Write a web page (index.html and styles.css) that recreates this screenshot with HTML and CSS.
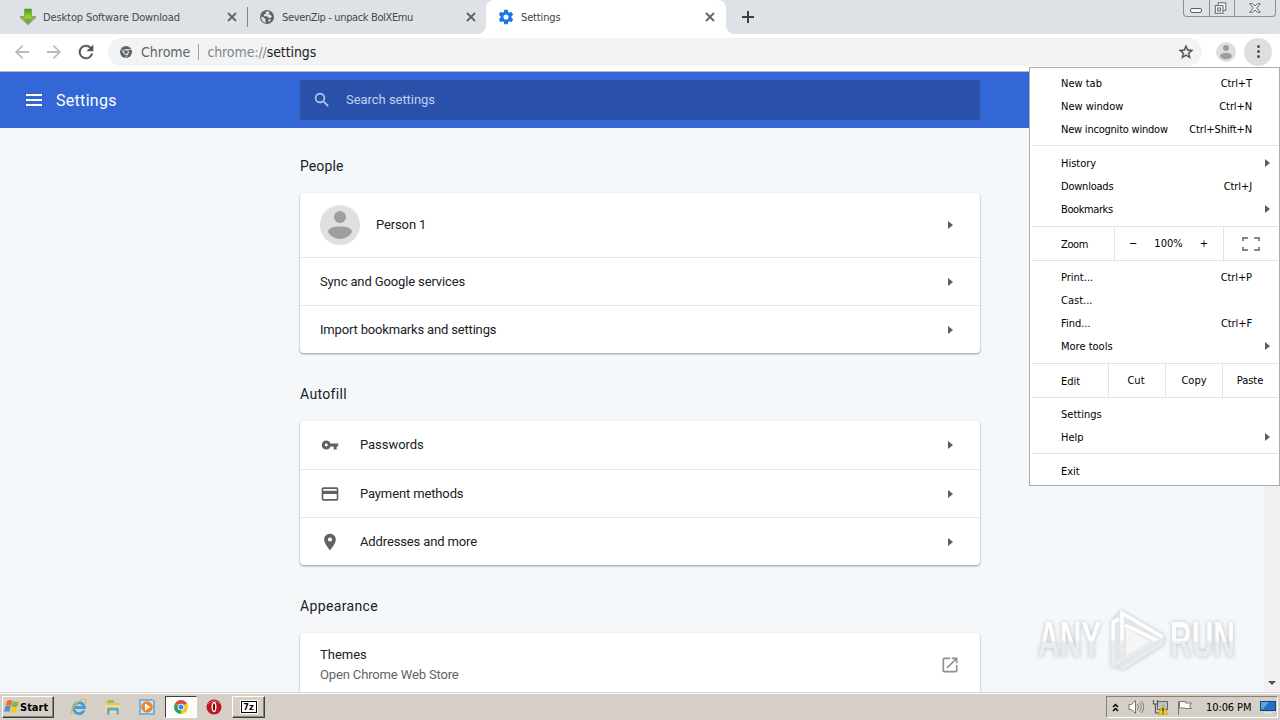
FILE: index.html
```
<!DOCTYPE html>
<html lang="en">

<head>
  <meta charset="utf-8">
  <title>Settings</title>
  <link rel="stylesheet" href="styles.css">
</head>

<body>
  <div class="tabstrip">
    <div class="tab tab-first">
      <svg class="favicon" width="18" height="18" viewBox="0 0 18 18">
        <defs><linearGradient id="green" x1="0" y1="0" x2="0" y2="1"><stop offset="0" stop-color="#3f9a12"/><stop offset=".55" stop-color="#9bd044"/><stop offset="1" stop-color="#47941e"/></linearGradient></defs>
        <path d="M1 10l8 7.500 8-7.500v-2H1z" fill="#aaa4a4"/>
        <path d="M5.500 1h7v7.500H16L9 15.500 2 8.500h3.500z" fill="url(#green)" stroke="#6ba33b" stroke-width=".7"/>
      </svg>
      <span class="tab-title t1">Desktop Software Download</span>
      <svg class="close" width="10" height="10" viewBox="0 0 10 10"><path d="M1 1l8 8M9 1L1 9"/></svg>
    </div>
    <div class="tab tab-second">
      <svg class="favicon" width="16" height="16" viewBox="0 0 16 16">
        <circle cx="8" cy="8" r="7" fill="#5f6368"/>
        <path d="M8.6 2.2l-2 1.1.3 1.6-2.2.6.4 1.7H8l1.2 1.5 2.4.3 1.3-1.4-1.2-1.6L9.3 5l1.2-1.2-.6-1.4zM2.3 7.5l2.6 1.1 1.9 2-.6 1.4.9 2-1.6-.5C3.300 12.500 2.200 10.200 2.300 7.500zM9.700 10.300l2.500.2-1.700 2.200-1.400-.6z" fill="#dee1e6"/>
      </svg>
      <span class="tab-title t2">SevenZip - unpack BolXEmu</span>
      <svg class="close" width="10" height="10" viewBox="0 0 10 10"><path d="M1 1l8 8M9 1L1 9"/></svg>
    </div>
    <div class="tab tab-active">
      <svg class="favicon" width="16" height="16" viewBox="1 1 22 22"><path fill="#1a73e8" d="M19.430 12.980c.040-.320.070-.640.070-.980s-.030-.660-.070-.980l2.110-1.650c.190-.150.240-.420.120-.640l-2-3.460c-.120-.220-.390-.300-.610-.220l-2.490 1c-.520-.400-1.080-.730-1.690-.980l-.380-2.650C14.460 2.180 14.250 2 14 2h-4c-.250 0-.460.180-.490.420l-.380 2.650c-.610.250-1.170.590-1.690.980l-2.490-1c-.230-.090-.490 0-.610.220l-2 3.460c-.130.220-.070.490.120.640l2.110 1.650c-.040.320-.070.650-.070.980s.030.660.070.980l-2.110 1.650c-.190.150-.240.420-.120.640l2 3.460c.120.220.390.300.610.220l2.490-1c.520.400 1.080.730 1.690.980l.380 2.650c.030.240.240.420.490.420h4c.250 0 .460-.180.490-.420l.380-2.650c.610-.250 1.170-.590 1.690-.980l2.490 1c.230.090.490 0 .610-.220l2-3.460c.120-.220.070-.490-.120-.640zM12 15.500a3.500 3.500 0 1 1 0-7 3.500 3.500 0 0 1 0 7z"/></svg>
      <span class="tab-title t3">Settings</span>
      <svg class="close" width="10" height="10" viewBox="0 0 10 10"><path d="M1 1l8 8M9 1L1 9"/></svg>
    </div>
    <svg class="newtab" width="12" height="12" viewBox="0 0 12 12"><path d="M6 0v12M0 6h12" stroke="#3c4043" stroke-width="2"/></svg>
    <div class="winbtns">
      <svg width="25" height="16" viewBox="0 0 25 16"><rect x="6.500" y="8.500" width="11" height="4" rx="1.500"/></svg>
      <svg width="25" height="16" viewBox="0 0 25 16"><path d="M8.500 5V2.500h8v8H13"/><rect x="5.500" y="5.500" width="8" height="8"/><rect x="8" y="8" width="3" height="3"/></svg>
      <svg width="41" height="16" viewBox="0 0 42 16"><path d="M15.500 3.500h3l2.500 2.500 2.500-2.500h3l-3.800 4.500 3.800 4.500h-3L21 10l-2.500 2.500h-3L19.300 8z"/></svg>
    </div>
  </div>

  <div class="toolbar">
    <svg class="nav" width="16" height="16" viewBox="3 3 18 18"><path fill="#b9bcbf" d="M20 11H7.830l5.590-5.590L12 4l-8 8 8 8 1.410-1.410L7.830 13H20v-2z"/></svg>
    <svg class="nav" width="16" height="16" viewBox="3 3 18 18"><path fill="#b9bcbf" d="M12 4l-1.410 1.410L16.170 11H4v2h12.170l-5.580 5.590L12 20l8-8z"/></svg>
    <svg class="nav" width="16" height="16" viewBox="3 3 18 18"><path fill="#505357" stroke="#505357" stroke-width=".4" d="M17.650 6.350A7.958 7.958 0 0 0 12 4a8 8 0 1 0 7.730 10h-2.080A6 6 0 1 1 12 6c1.660 0 3.140.690 4.220 1.780L13 11h7V4l-2.350 2.350z"/></svg>
    <div class="omnibox">
      <svg width="12" height="12" viewBox="0 0 12 12"><circle cx="6" cy="6" r="6" fill="#5f6368"/><circle cx="6" cy="6" r="2.400" fill="#5f6368" stroke="#f1f3f4"/><path d="M6 3.500h5M3.800 7.200L1.500 3.200M8.200 7.300L5.700 11.700" stroke="#f1f3f4" stroke-width=".7"/></svg>
      <span class="origin">Chrome</span>
      <span class="divider"></span>
      <span class="url">chrome://<b>settings</b></span>
      <svg class="star" width="16" height="16" viewBox="1 1 22 22"><path fill="#505357" stroke="#505357" stroke-width=".5" d="M22 9.240l-7.190-.620L12 2 9.190 8.630 2 9.240l5.460 4.730L5.820 21 12 17.270 18.180 21l-1.630-7.030L22 9.240zM12 15.400l-3.760 2.270 1-4.280-3.320-2.880 4.380-.380L12 6.100l1.710 4.040 4.380.380-3.320 2.880 1 4.280L12 15.400z"/></svg>
    </div>
    <svg class="profile" width="20" height="20" viewBox="0 0 40 40"><circle cx="20" cy="20" r="20" fill="#dedede"/><circle cx="20" cy="12" r="6" fill="#9e9e9e"/><ellipse cx="20" cy="28" rx="12" ry="6.500" fill="#9e9e9e"/></svg>
    <div class="more"><i></i><i></i><i></i></div>
  </div>

  <div class="header">
    <svg class="burger" width="16" height="12" viewBox="0 0 16 12"><path d="M0 1h16M0 6h16M0 11h16" stroke="#fff" stroke-width="2"/></svg>
    <h1>Settings</h1>
    <div class="search">
      <svg width="16" height="16" viewBox="2 2 20 20"><path fill="#b9caef" d="M15.500 14h-.790l-.280-.270A6.471 6.471 0 0 0 16 9.500 6.500 6.500 0 1 0 9.500 16c1.610 0 3.090-.590 4.230-1.570l.270.280v.790l5 4.990L20.490 19l-4.990-5zm-6 0a4.500 4.500 0 1 1 0-9 4.500 4.500 0 0 1 0 9z"/></svg>
      <span>Search settings</span>
    </div>
  </div>

  <div class="content">
    <div class="page">
      <h2 class="h-people">People</h2>
      <div class="card">
        <div class="row row-person">
          <svg class="avatar" width="40" height="40" viewBox="0 0 40 40"><circle cx="20" cy="20" r="20" fill="#e0e0e0"/><circle cx="20" cy="12" r="6" fill="#9e9e9e"/><path d="M8 27c0-3.500 5-5.500 12-5.500s12 2 12 5.500c-2.500 4-7 7-12 7s-9.500-3-12-7z" fill="#9e9e9e"/></svg>
          <span class="label">Person 1</span><i class="arrow"></i>
        </div>
        <div class="row"><span class="label">Sync and Google services</span><i class="arrow"></i></div>
        <div class="row"><span class="label l-import">Import bookmarks and settings</span><i class="arrow"></i></div>
      </div>
      <h2 class="h-autofill">Autofill</h2>
      <div class="card">
        <div class="row row-icon row-pass">
          <svg width="20" height="20" viewBox="-1.500 -1.500 27 27"><path fill="#5f6368" d="M12.650 10A5.990 5.990 0 0 0 7 6a6 6 0 1 0 5.650 8H17v4h4v-4h2v-4H12.650zM7 14a2 2 0 1 1 0-4 2 2 0 0 1 0 4z"/></svg>
          <span class="label l-pass">Passwords</span><i class="arrow"></i>
        </div>
        <div class="row row-icon">
          <svg width="20" height="20" viewBox="0 0 24 24"><path fill="#5f6368" d="M20 4H4c-1.110 0-1.990.890-1.990 2L2 18c0 1.110.890 2 2 2h16c1.110 0 2-.890 2-2V6c0-1.110-.890-2-2-2zm0 14H4v-6h16v6zm0-10H4V6h16v2z"/></svg>
          <span class="label">Payment methods</span><i class="arrow"></i>
        </div>
        <div class="row row-icon">
          <svg width="20" height="20" viewBox="0 0 24 24"><path fill="#5f6368" d="M12 2C8.130 2 5 5.130 5 9c0 5.250 7 13 7 13s7-7.750 7-13c0-3.870-3.130-7-7-7zm0 9.500a2.500 2.500 0 1 1 0-5 2.500 2.500 0 0 1 0 5z"/></svg>
          <span class="label">Addresses and more</span><i class="arrow"></i>
        </div>
      </div>
      <h2 class="h-appearance">Appearance</h2>
      <div class="card">
        <div class="row row-themes">
          <div class="two-line">
            <span>Themes</span>
            <span class="sub">Open Chrome Web Store</span>
          </div>
          <svg class="external" width="20" height="20" viewBox="0 0 24 24"><path fill="#8b9197" d="M19 19H5V5h7V3H5a2 2 0 0 0-2 2v14a2 2 0 0 0 2 2h14c1.100 0 2-.900 2-2v-7h-2v7zM14 3v2h3.590l-9.830 9.830 1.410 1.410L19 6.410V10h2V3h-7z"/></svg>
        </div>
      </div>
    </div>
    <div class="scrollbar"><i></i></div>
  </div>

  <div class="taskbar">
    <div class="start">
      <svg width="17" height="16" viewBox="0 0 17 16"><path d="M3 2q3-2 5.500 0L7 7Q4.500 5.500 1.700 7z" fill="#ed6b35"/><path d="M9 2.300q3 1.500 6 0L13.500 7.300q-3 1.700-6 0z" fill="#86b93b"/><path d="M1.400 7.500Q4 6 6.700 7.500l-1.500 5.500Q3 11.500 0 13z" fill="#4a91d6"/><path d="M7.200 7.800q3 1.700 6 0l-1.500 5.500q-3 1.700-6 0z" fill="#f6c733"/></svg>
      <span>Start</span>
    </div>
    <svg class="ie" width="18" height="18" viewBox="0 0 18 18"><path d="M14 12.500a5.500 5.500 0 1 1 .5-3H5" fill="none" stroke="#3d9fdd" stroke-width="2.800"/><path d="M2.500 16C-1 14 5 5 11 2c5-2.500 6 0 4 4" fill="none" stroke="#e0b93c" stroke-width="1.200"/></svg>
    <svg class="explorer" width="18" height="18" viewBox="0 0 18 18"><path d="M2 3h5l1 2h8v10H2z" fill="#e3c45f"/><path d="M4 2h6v3H4z" fill="#8cc562"/><path d="M1 7h15v8H1z" fill="#f3dc8b"/><path d="M3 16.500v-5q0-2 2-2h8q2 0 2 2v5h-2.500v-4h-7v4z" fill="#58abd9"/></svg>
    <svg class="player" width="18" height="18" viewBox="0 0 18 18"><path d="M1 1h13l3 2v14H1z" fill="#78aee0"/><path d="M3 3h12v12H3z" fill="#d5e8f7"/><circle cx="9" cy="9" r="5.800" fill="#f28620"/><path d="M7 5.500v7L12.500 9z" fill="#fff"/></svg>
    <div class="task-chrome">
      <svg width="14" height="14" viewBox="0 0 14 14"><path d="M7 7L.94 3.500A7 7 0 0 1 13.060 3.500z" fill="#dd4b3e"/><path d="M7 7l6.060-3.500A7 7 0 0 1 7 14z" fill="#f7c927"/><path d="M7 7v7A7 7 0 0 1 .94 3.500z" fill="#36a058"/><circle cx="7" cy="7" r="3.300" fill="#fff"/><circle cx="7" cy="7" r="2.500" fill="#4285e8"/></svg>
    </div>
    <svg class="opera" width="16" height="16" viewBox="0 0 16 16"><circle cx="8" cy="8" r="7.500" fill="#bc1622"/><path d="M2 5q6-6 12 0" fill="none" stroke="#db6269"/><ellipse cx="8" cy="8" rx="1.800" ry="4.500" fill="#7d0810" stroke="#fff" stroke-width="1.300"/></svg>
    <div class="task-7z"><span>7z</span></div>
    <div class="tray">
      <svg class="chev" width="7" height="9" viewBox="0 0 7 9"><path d="M1 4l2.500-2.500L6 4M1 8l2.500-2.500L6 8" fill="none" stroke="#000" stroke-width="1.500"/></svg>
      <svg class="speaker" width="17" height="14" viewBox="0 0 17 14"><path d="M1 4.500h2.500l4-4v13l-4-4H1z" fill="#fff" stroke="#777"/><path d="M9.500 4q2 3 0 6M11.500 2.500q3.500 4.500 0 9M13.500 1q4.500 6 0 12" fill="none" stroke="#808080"/></svg>
      <svg class="net" width="17" height="16" viewBox="0 0 17 16"><rect x="5.500" y="2.500" width="10" height="8" fill="#bfc1c2" stroke="#666"/><path d="M1.500 1v4h4V1M3.500 5v9h5" fill="none" stroke="#555" stroke-width="1.200"/><path d="M11 6l5 9.500H6z" fill="#f7cf18" stroke="#b79516" stroke-width=".6"/><path d="M11 9v3.500m0 1v1.200" stroke="#222" stroke-width="1.300"/></svg>
      <svg class="flag" width="17" height="15" viewBox="0 0 17 15"><path d="M1.500 1v14M2.500 1.500h6v1.500h6l-2 3 2 2.500H8V8H2.500z" fill="#fff" stroke="#777"/></svg>
      <span class="clock">10:06 PM</span>
      <svg class="desktop" width="16" height="14" viewBox="0 0 16 14"><rect x=".5" y="1.500" width="15" height="9" fill="#2272c9" stroke="#184475"/><path d="M1 2h8L3 9H1z" fill="#57a3e5"/><path d="M5 12h7v1.500H5z" fill="#e2e2df"/></svg>
    </div>
  </div>

  <div class="menu">
    <div class="item"><span>New tab</span><em>Ctrl+T</em></div>
    <div class="item"><span>New window</span><em>Ctrl+N</em></div>
    <div class="item"><span class="tight">New incognito window</span><em>Ctrl+Shift+N</em></div>
    <div class="sep"></div>
    <div class="item"><span>History</span><i class="arrow"></i></div>
    <div class="item"><span class="tight">Downloads</span><em>Ctrl+J</em></div>
    <div class="item"><span class="tighter">Bookmarks</span><i class="arrow"></i></div>
    <div class="group group-zoom">
      <span class="g-label">Zoom</span>
      <div class="zoom"><span>&#8722;</span><span>100%</span><span>+</span></div>
      <div class="full"><svg width="18" height="14" viewBox="0 0 18 14"><path d="M1 4V1h5M12 1h5v3M17 10v3h-5M6 13H1v-3" fill="none" stroke="#848789" stroke-width="2"/></svg></div>
    </div>
    <div class="item"><span>Print...</span><em>Ctrl+P</em></div>
    <div class="item"><span>Cast...</span></div>
    <div class="item"><span>Find...</span><em>Ctrl+F</em></div>
    <div class="item"><span>More tools</span><i class="arrow"></i></div>
    <div class="group group-edit">
      <span class="g-label">Edit</span>
      <span class="cut">Cut</span>
      <span>Copy</span>
      <span>Paste</span>
    </div>
    <div class="item"><span>Settings</span></div>
    <div class="item"><span>Help</span><i class="arrow"></i></div>
    <div class="sep"></div>
    <div class="item"><span>Exit</span></div>
  </div>

  <div class="watermark">
    <span>ANY</span>
    <svg width="62" height="64" viewBox="0 0 62 64" fill="none">
      <defs><linearGradient id="shine" gradientUnits="userSpaceOnUse" x1="0" y1="31" x2="0" y2="34"><stop offset="0" stop-color="#fff"/><stop offset="1" stop-color="#e9ebec"/></linearGradient></defs>
      <path d="M7 13l9-10 43 25v8L18 62 7 57z" fill="#e3e6e8"/>
      <path d="M21 20l25 14-25 14z" fill="#f3f5f6"/>
      <path d="M14 11l-6 3v43l43-25L20 17M17 47V5l41 24M57 35L17 60" stroke="url(#shine)" stroke-width="3.500"/>
    </svg>
    <span class="run">RUN</span>
  </div>
</body>

</html>
```
FILE: styles.css
```
* {
  box-sizing: border-box;
}
body {
  margin: 0;
  width: 1280px;
  height: 720px;
  overflow: hidden;
  position: relative;
  font-family: "DejaVu Sans Condensed", "DejaVu Sans", sans-serif;
  font-size: 11px;
  color: #000;
}
svg {
  display: block;
  flex: none;
}

/* tabs */
.tabstrip {
  display: flex;
  height: 34px;
  background: #dee1e6;
}
.tab {
  display: flex;
  align-items: center;
  height: 34px;
  color: #45484c;
  white-space: nowrap;
}
.tab-first {
  width: 248px;
  padding: 0 11px 0 19px;
  background: linear-gradient(#808387, #808387) 247px 7px / 1px 20px no-repeat;
}
.tab-second {
  width: 238px;
  padding: 0 10px 0 11px;
}
.tab-active {
  width: 240px;
  padding: 0 11px 0 12px;
  background: #fff;
  border-radius: 8px 8px 0 0;
  color: #3c4043;
  position: relative;
}
.tab-active::before,
.tab-active::after {
  content: "";
  position: absolute;
  bottom: 0;
  width: 8px;
  height: 8px;
}
.tab-active::before {
  left: -8px;
  background: radial-gradient(circle at 0 0, transparent 7.5px, #fff 8px);
}
.tab-active::after {
  right: -8px;
  background: radial-gradient(circle at 100% 0, transparent 7.5px, #fff 8px);
}
.tab-title {
  margin-left: 7px;
}
.t1 {
  margin-left: 6px;
  letter-spacing: -0.12px;
}
.t2 {
  letter-spacing: -0.36px;
}
.t3 {
  letter-spacing: -0.15px;
}
.close {
  margin-left: auto;
  stroke: #5f6368;
  stroke-width: 1.8;
}
.newtab {
  margin: 11px 0 0 16px;
}
.winbtns {
  display: flex;
  height: 17px;
  margin: 0 4px 0 auto;
  border: 1px solid #8a8e96;
  border-top: 0;
  border-radius: 0 0 4px 4px;
  fill: #f4f5f7;
  stroke: #5d6168;
}
.winbtns svg + svg {
  border-left: 1px solid #8a8e96;
}

/* toolbar */
.toolbar {
  display: flex;
  align-items: center;
  height: 38px;
  padding: 0 8px 2px 14px;
  background: #fff;
  border-bottom: 1px solid #b6b9bd;
}
.nav {
  margin-right: 16px;
}
.omnibox {
  display: flex;
  align-items: center;
  width: 1094px;
  height: 28px;
  margin-left: -2px;
  padding: 0 8px 0 12px;
  border-radius: 14px;
  background: #f1f3f4;
  font-size: 14px;
  color: #5f6368;
}
.origin {
  margin-left: 9px;
}
.divider {
  width: 1px;
  height: 16px;
  margin: 0 8px;
  background: #9aa0a6;
}
.url {
  letter-spacing: -0.1px;
  color: #80868b;
}
.url b {
  font-weight: normal;
  color: #202124;
}
.star {
  margin-left: auto;
}
.profile {
  margin-left: 14px;
}
.more {
  display: flex;
  flex-direction: column;
  align-items: center;
  justify-content: center;
  gap: 2px;
  width: 28px;
  height: 28px;
  margin-left: 8px;
  border-radius: 50%;
  background: #dfdfdf;
}
.more i {
  width: 3px;
  height: 3px;
  border-radius: 50%;
  background: #505357;
}

/* settings header */
.header {
  display: flex;
  align-items: center;
  height: 56px;
  padding-left: 26px;
  background: #3367d6;
  font-family: Roboto, sans-serif;
}
h1 {
  width: 244px;
  margin: 0 0 0 14px;
  font-size: 16px;
  font-weight: normal;
  letter-spacing: 0.3px;
  color: #fff;
}
.search {
  display: flex;
  align-items: center;
  width: 680px;
  height: 40px;
  padding-left: 14px;
  background: #2a51a9;
  color: #c0cfee;
  font-size: 13px;
}
.search span {
  margin: -2px 0 0 16px;
  letter-spacing: -0.04px;
}

/* settings page */
.content {
  display: flex;
  height: 564px;
  overflow: hidden;
  background: #f5f8fb;
  font-family: Roboto, sans-serif;
}
.page {
  width: 680px;
  margin-left: 300px;
}
h2 {
  height: 68px;
  margin: 0;
  padding-top: 32px;
  font-size: 14px;
  line-height: 18px;
  font-weight: normal;
  letter-spacing: 0.35px;
  color: #202124;
}
.h-people {
  height: 65px;
  padding-top: 29px;
  letter-spacing: 0.1px;
}
.card {
  border-radius: 4px;
  background: #fff;
  box-shadow: 0 1px 2px rgba(60, 64, 67, 0.4), 0 1px 3px rgba(60, 64, 67, 0.15);
}
.row {
  display: flex;
  align-items: center;
  height: 48px;
  padding: 0 27px 0 20px;
  border-top: 1px solid #e6e7e8;
  font-size: 13px;
  color: #202124;
}
.row:first-child {
  border-top: 0;
}
.row-person {
  height: 64px;
}
.row-person .label,
.row-pass .label {
  margin-top: -2px;
}
.label {
  letter-spacing: -0.13px;
}
.l-import {
  letter-spacing: -0.17px;
}
.l-pass {
  letter-spacing: -0.05px;
}
.avatar {
  margin-right: 16px;
}
.row-icon svg {
  margin-right: 20px;
}
.row-themes {
  height: 64px;
  padding-right: 20px;
}
.two-line {
  display: flex;
  flex-direction: column;
  line-height: 20px;
}
.sub {
  letter-spacing: -0.14px;
  color: #5f6368;
}
.external {
  margin-left: auto;
}
.arrow {
  width: 0;
  margin-left: auto;
  border: 4px solid transparent;
  border-left: 5px solid #5a5d60;
  border-right: 0;
}
.scrollbar {
  width: 16px;
  margin-left: auto;
  padding: 553px 0 0 4px;
  background: #f1f1f1;
}
.scrollbar i {
  display: block;
  width: 0;
  border: 4px solid transparent;
  border-top-color: #505050;
  border-bottom: 0;
}

/* taskbar */
.taskbar {
  display: flex;
  align-items: center;
  height: 28px;
  padding: 1px 2px 0;
  border-top: 1px solid #d5d0c8;
  box-shadow: inset 0 1px #fff;
  background: #d5cfc7;
}
.start {
  display: flex;
  align-items: center;
  width: 52px;
  height: 22px;
  padding-left: 1px;
  border: 1px solid;
  border-color: #fff #404040 #404040 #fff;
  box-shadow: inset -1px -1px #85817b;
  font-size: 11px;
  font-weight: bold;
}
.start span {
  margin-left: -1px;
}
.ie,
.explorer,
.player {
  margin-left: 16px;
}
.task-chrome {
  display: flex;
  align-items: center;
  justify-content: center;
  width: 32px;
  height: 22px;
  margin-left: 9px;
  border: 1px solid;
  border-color: #404040 #fff #fff #404040;
  background: #fdfdfc;
}
.opera {
  margin-left: 9px;
}
.task-7z {
  display: flex;
  align-items: center;
  justify-content: center;
  width: 33px;
  height: 22px;
  margin-left: 10px;
  border: 1px solid;
  border-color: #fff #404040 #404040 #fff;
  box-shadow: inset -1px -1px #85817b;
}
.task-7z span {
  width: 16px;
  height: 12px;
  border: 1px solid #000;
  outline: 1px solid #fff;
  background: #fff;
  font-size: 9px;
  line-height: 10px;
  font-weight: bold;
  text-align: center;
}
.tray {
  display: flex;
  align-items: center;
  width: 172px;
  height: 22px;
  margin-left: auto;
  padding-left: 5px;
  border: 1px solid;
  border-color: #85817b #fff #fff #85817b;
}
.speaker {
  margin-left: 9px;
}
.net {
  margin-left: 7px;
}
.flag {
  margin-left: 8px;
}
.clock {
  margin-left: 12px;
  letter-spacing: -0.1px;
  white-space: nowrap;
}
.desktop {
  margin: 0 1px 0 auto;
}

/* app menu, opens over the page */
.menu {
  position: absolute;
  left: 1029px;
  top: 67px;
  width: 251px;
  height: 419px;
  padding: 4px 1px 0 2px;
  border: 1px solid #a9abae;
  background: #fff;
}
.item {
  display: flex;
  align-items: center;
  height: 23px;
  padding: 0 8px 0 29px;
}
.item .arrow {
  margin-top: -1px;
}
.item em {
  margin: 0 18px 0 auto;
  font-style: normal;
  letter-spacing: -0.1px;
}
.tight {
  letter-spacing: -0.22px;
}
.tighter {
  letter-spacing: -0.4px;
}
.sep {
  height: 1px;
  margin: 4px 0 6px;
  background: #e2e2e2;
}
.group {
  display: flex;
  height: 35px;
  margin: 5px 0;
  border: 1px solid #e2e2e2;
  border-width: 1px 0;
}
.group > * {
  display: flex;
  align-items: center;
  justify-content: center;
  width: 57px;
  border-left: 1px solid #e2e2e2;
}
.group > :last-child {
  width: 55px;
}
.group > .g-label {
  justify-content: flex-start;
  width: 76px;
  padding: 2px 0 0 29px;
  border-left: 0;
}
.group > .cut {
  padding-right: 2px;
}
.group-zoom > .g-label {
  width: 82px;
  letter-spacing: -0.4px;
}
.group > .zoom {
  width: 109px;
  justify-content: space-between;
  padding: 0 15px 0 14px;
}

/* logo over the page corner */
.watermark {
  position: absolute;
  left: 1038px;
  top: 608px;
  display: flex;
  align-items: center;
  gap: 3px;
  font: bold 50px/64px "Liberation Sans", sans-serif;
  filter: drop-shadow(0 0 2px #b9bec1);
}
.watermark span {
  width: 106px;
  margin-right: -42px;
  transform: scaleX(0.6);
  transform-origin: left;
  background: linear-gradient(#fdfdfe 50%, #e9ebec 54%);
  background-clip: text;
  -webkit-background-clip: text;
  color: transparent;
}
.watermark .run {
  width: 112px;
}
```
